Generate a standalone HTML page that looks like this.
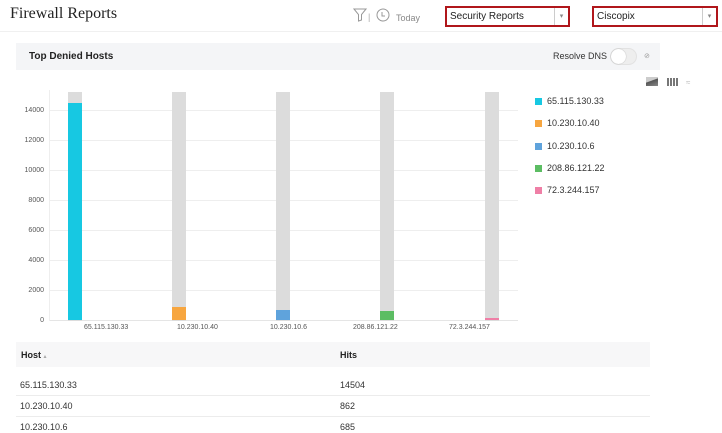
<!DOCTYPE html>
<html><head><style>
*{margin:0;padding:0;box-sizing:border-box}
body{width:722px;height:433px;background:#fff;font-family:"Liberation Sans",sans-serif;position:relative;overflow:hidden;color:#222}
.a{position:absolute}
.sel{position:absolute;border:2px solid #b0161b;background:#fff;height:21px;font-size:10px;padding:3px 0 0 3px}
.sel span{position:absolute;right:0;top:0;width:14px;height:17px;border-left:1px solid #ccc;font-size:7px;color:#888;text-align:center;line-height:17px}
.yl{position:absolute;left:20px;width:24px;text-align:right;font-size:7px;color:#555}
.gl{position:absolute;left:50px;width:468px;height:1px;background:#eee}
.gb{position:absolute;width:14px;background:#dcdcdc;top:92px;height:229px}
.xl{position:absolute;font-size:7px;color:#555;top:324px}
.lg{position:absolute;left:535px;font-size:9px;color:#333}
.lg i{display:inline-block;width:7px;height:7px;margin-right:5px;vertical-align:-1px}
.row{position:absolute;left:16px;width:634px;font-size:9px;color:#333}
</style></head><body>
<div class="a" style="left:10px;top:5px;font-family:'Liberation Serif',serif;font-size:16px;color:#222">Firewall Reports</div>
<div class="a" style="left:0;top:31px;width:722px;height:1px;background:#f0f0f0"></div>
<svg class="a" style="left:353px;top:8px" width="14" height="14" viewBox="0 0 14 14"><path d="M1 1h12L8.5 6.5V12L5.5 13V6.5z" fill="none" stroke="#999" stroke-width="1"/></svg>
<div class="a" style="left:368px;top:12px;font-size:9px;color:#aaa">|</div>
<svg class="a" style="left:376px;top:8px" width="14" height="14"><circle cx="7" cy="7" r="6" fill="none" stroke="#999"/><path d="M6 4v4h3" fill="none" stroke="#999"/></svg>
<div class="a" style="left:396px;top:13px;font-size:9px;color:#888">Today</div>
<div class="sel" style="left:445px;top:6px;width:125px">Security Reports<span>▾</span></div>
<div class="sel" style="left:592px;top:6px;width:126px">Ciscopix<span>▾</span></div>
<div class="a" style="left:16px;top:43px;width:644px;height:27px;background:#f4f5f7"></div>
<div class="a" style="left:29px;top:51px;font-size:10px;font-weight:bold;color:#222">Top Denied Hosts</div>
<div class="a" style="left:553px;top:51px;font-size:9px;color:#333">Resolve DNS</div>
<div class="a" style="left:610px;top:48px;width:27px;height:17px;border-radius:9px;background:#eee;border:1px solid #e2e2e2"><div style="width:15px;height:15px;border-radius:8px;background:#fff;box-shadow:0 0 1px #999"></div></div>
<div class="a" style="left:644px;top:52px;font-size:7px;color:#999">⊘</div>
<div class="a" style="left:646px;top:77px;width:12px;height:9px;background:linear-gradient(160deg,#ccc 40%,#555 45%,#888)"></div>
<div class="a" style="left:667px;top:78px;width:12px;height:8px;background:repeating-linear-gradient(90deg,#777 0 2px,#fff 2px 3px)"></div>
<div class="a" style="left:686px;top:78px;font-size:8px;color:#bbb">≈</div>
<div class="a" style="left:49px;top:90px;width:1px;height:231px;background:#eee"></div>
<div class="gl" style="top:110px"></div><div class="gl" style="top:140px"></div><div class="gl" style="top:170px"></div><div class="gl" style="top:200px"></div><div class="gl" style="top:230px"></div><div class="gl" style="top:260px"></div><div class="gl" style="top:290px"></div><div class="gl" style="top:320px;background:#e5e5e5"></div>
<div class="yl" style="top:107px">14000</div><div class="yl" style="top:137px">12000</div><div class="yl" style="top:167px">10000</div><div class="yl" style="top:197px">8000</div><div class="yl" style="top:227px">6000</div><div class="yl" style="top:257px">4000</div><div class="yl" style="top:287px">2000</div><div class="yl" style="top:317px">0</div>
<div class="gb" style="left:68px"></div><div class="gb" style="left:172px"></div><div class="gb" style="left:276px"></div><div class="gb" style="left:380px"></div><div class="gb" style="left:485px"></div>
<div class="a" style="left:68px;top:103px;width:14px;height:217px;background:#17c8e2"></div>
<div class="a" style="left:172px;top:307px;width:14px;height:13px;background:#f7a640"></div>
<div class="a" style="left:276px;top:310px;width:14px;height:10px;background:#5fa3dc"></div>
<div class="a" style="left:380px;top:311px;width:14px;height:9px;background:#5cbd63"></div>
<div class="a" style="left:485px;top:318px;width:14px;height:2px;background:#ef7fa6"></div>
<div class="xl" style="left:84px">65.115.130.33</div><div class="xl" style="left:177px">10.230.10.40</div><div class="xl" style="left:270px">10.230.10.6</div><div class="xl" style="left:353px">208.86.121.22</div><div class="xl" style="left:449px">72.3.244.157</div>
<div class="lg" style="top:96px"><i style="background:#17c8e2"></i>65.115.130.33</div>
<div class="lg" style="top:118px"><i style="background:#f7a640"></i>10.230.10.40</div>
<div class="lg" style="top:141px"><i style="background:#5fa3dc"></i>10.230.10.6</div>
<div class="lg" style="top:163px"><i style="background:#5cbd63"></i>208.86.121.22</div>
<div class="lg" style="top:185px"><i style="background:#ef7fa6"></i>72.3.244.157</div>
<div class="a" style="left:16px;top:342px;width:634px;height:25px;background:#f7f7f8"></div>
<div class="a" style="left:21px;top:350px;font-size:9px;font-weight:bold">Host <span style="font-size:6px;color:#aaa;font-weight:normal">▴</span></div>
<div class="a" style="left:340px;top:350px;font-size:9px;font-weight:bold">Hits</div>
<div class="row" style="top:380px"><span style="position:absolute;left:4px">65.115.130.33</span><span style="position:absolute;left:324px">14504</span></div>
<div class="a" style="left:16px;top:395px;width:634px;height:1px;background:#ececec"></div>
<div class="row" style="top:401px"><span style="position:absolute;left:4px">10.230.10.40</span><span style="position:absolute;left:324px">862</span></div>
<div class="a" style="left:16px;top:416px;width:634px;height:1px;background:#ececec"></div>
<div class="row" style="top:422px"><span style="position:absolute;left:4px">10.230.10.6</span><span style="position:absolute;left:324px">685</span></div>
</body></html>
